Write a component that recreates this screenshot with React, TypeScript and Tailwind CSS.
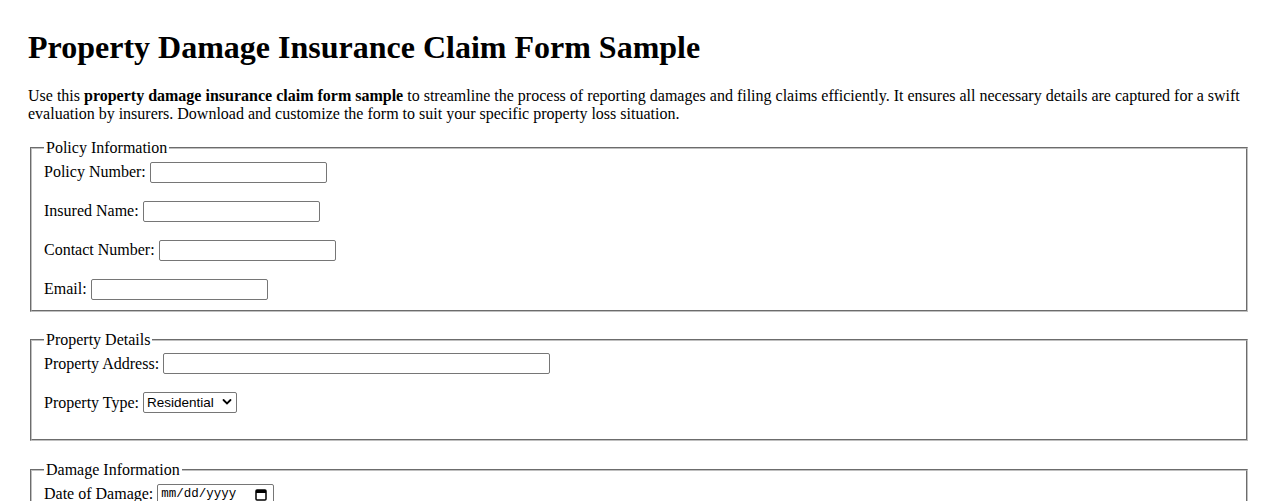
import type { FC, ReactNode } from 'react';

const inputCls =
  "h-[21px] border border-[#767676] rounded-[2px] bg-white px-[2px] font-['Liberation_Sans',Arial,sans-serif] text-[13.5px] outline-none";

const Row: FC<{ label: string; last?: boolean; children: ReactNode }> = ({ label, last, children }) => (
  <div className={`flex items-center h-[21px] ${last ? '' : 'mb-[18px]'}`}>
    <label className="mr-[4px] whitespace-nowrap leading-[normal]">{label}</label>
    {children}
  </div>
);

const Section: FC<{ title: string; className?: string; children: ReactNode }> = ({ title, className = '', children }) => (
  <fieldset
    className={`mx-[2px] border-2 [border-style:groove] border-[#c0c0c0] px-[12px] pt-[4.6px] ${className}`}
  >
    <legend className="px-[2px] leading-[normal]">{title}</legend>
    {children}
  </fieldset>
);

export default function App() {
  return (
    <div className="min-h-screen bg-white px-[28px] pt-[29px] font-['Liberation_Serif','Times_New_Roman',serif] text-[16px] leading-[normal] text-black">
      <h1 className="text-[32px] font-bold leading-[normal]">Property Damage Insurance Claim Form Sample</h1>
      <p className="mt-[21px] mb-[16px] leading-[normal]">
        Use this <b>property damage insurance claim form sample</b> to streamline the process of reporting damages and
        filing claims efficiently. It ensures all necessary details are captured for a swift evaluation by insurers.
        Download and customize the form to suit your specific property loss situation.
      </p>

      <Section title="Policy Information" className="mb-[19px] pb-[10px]">
        <Row label="Policy Number:">
          <input type="text" className={`${inputCls} w-[177px]`} />
        </Row>
        <Row label="Insured Name:">
          <input type="text" className={`${inputCls} w-[177px]`} />
        </Row>
        <Row label="Contact Number:">
          <input type="text" className={`${inputCls} w-[177px]`} />
        </Row>
        <Row label="Email:" last>
          <input type="email" className={`${inputCls} w-[177px]`} />
        </Row>
      </Section>

      <Section title="Property Details" className="mb-[20px] pb-[26px]">
        <Row label="Property Address:">
          <input type="text" className={`${inputCls} w-[387px]`} />
        </Row>
        <Row label="Property Type:" last>
          <div className="relative">
            <select
              defaultValue="Residential"
              className={`${inputCls} h-[20px] w-[94px] appearance-none pl-[3px] pr-[18px] text-black`}
            >
              <option>Residential</option>
              <option>Commercial</option>
              <option>Industrial</option>
            </select>
            <svg
              width="10"
              height="10"
              viewBox="0 0 10 10"
              className="pointer-events-none absolute right-[5px] top-[5px]"
            >
              <path d="M1.5 3L5 6.5L8.5 3" stroke="black" strokeWidth="1.8" fill="none" strokeLinecap="round" />
            </svg>
          </div>
        </Row>
      </Section>

      <Section title="Damage Information" className="mb-[18px] pb-[10px]">
        <Row label="Date of Damage:">
          <div className="relative flex h-[21px] w-[117px] items-center rounded-[2px] border border-[#767676] bg-white pl-[3px] font-['Liberation_Mono',monospace] text-[12.5px] text-black">
            mm/dd/yyyy
            <svg width="12" height="13" viewBox="0 0 12 13" className="absolute right-[6px] top-[3px]">
              <rect x="1" y="2" width="10" height="10" rx="1" fill="none" stroke="black" strokeWidth="1.5" />
              <rect x="1" y="2" width="10" height="3" fill="black" />
            </svg>
          </div>
        </Row>
        <Row label="Damage Description:" last>
          <input type="text" className={`${inputCls} w-[177px]`} />
        </Row>
      </Section>
    </div>
  );
}
